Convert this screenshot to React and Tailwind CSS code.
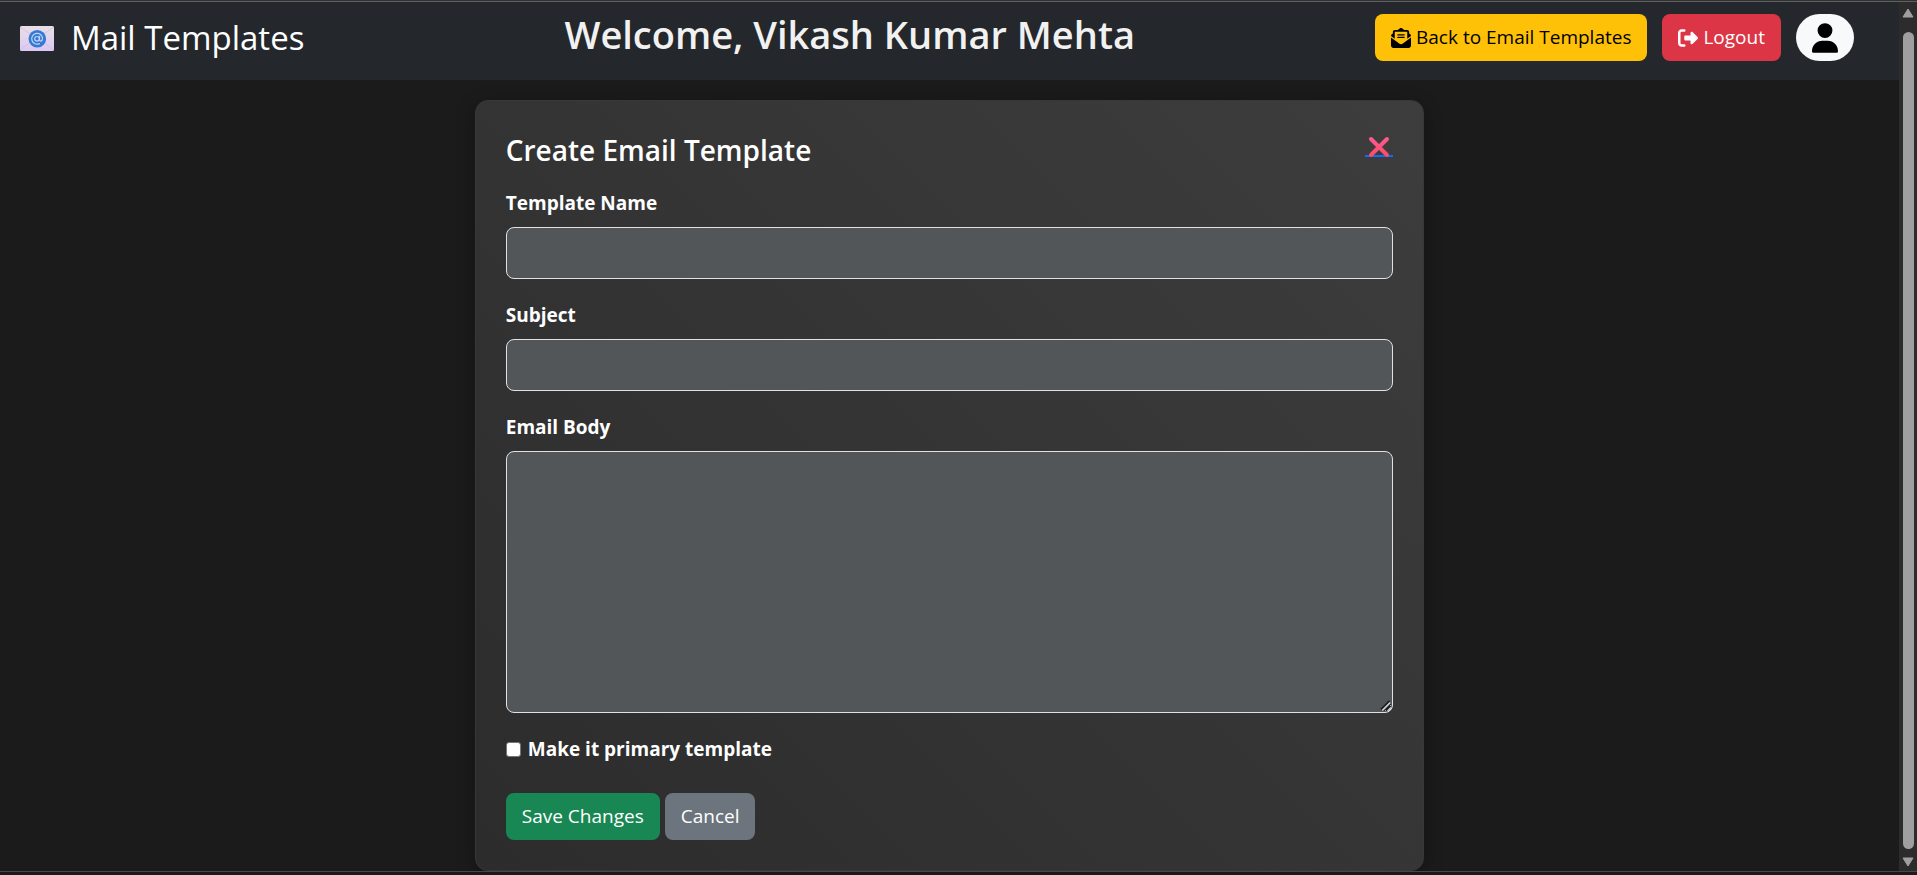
import { FaEnvelopeOpenText, FaRightFromBracket, FaUser } from "react-icons/fa6";

function MailLogo() {
  return (
    <svg viewBox="0 0 34 25" className="h-[25px] w-[34px]" aria-hidden="true">
      <defs>
        <linearGradient id="paper" x1="0" y1="0" x2="0" y2="1">
          <stop offset="0" stopColor="#e9dfe6" />
          <stop offset="1" stopColor="#dcc8f4" />
        </linearGradient>
      </defs>
      <rect width="34" height="25" rx="1.5" fill="url(#paper)" />
      <path d="M0 1L13 10M34 1L21 10M0 24L12 15M34 24L22 15" stroke="#cfbcdc" strokeWidth="0.7" fill="none" />
      <circle cx="17.3" cy="12.7" r="8.8" fill="#3479d3" />
      <g fill="none" stroke="#c3d3f5" strokeWidth="1.2" strokeLinecap="round">
        <circle cx="17" cy="12.8" r="2.3" />
        <path d="M19.5 10.4v3.2c0 2.2 3 2 3-1a5.4 5.4 0 1 0-3 5" />
      </g>
    </svg>
  );
}

function CloseMark() {
  return (
    <svg viewBox="0 0 28 22" className="h-[22px] w-7" aria-hidden="true">
      <defs>
        <linearGradient id="cross" gradientUnits="userSpaceOnUse" x1="0" y1="1" x2="0" y2="21">
          <stop offset="0" stopColor="#fd5a94" />
          <stop offset="1" stopColor="#fb4a63" />
        </linearGradient>
      </defs>
      <rect y="19" width="28" height="2" fill="#0d6efd" />
      <path d="M6 3L22 19M22 3L6 19" fill="none" stroke="url(#cross)" strokeWidth="4" strokeLinecap="round" />
    </svg>
  );
}

function ResizeGrip() {
  return (
    <svg viewBox="0 0 12 12" className="pointer-events-none absolute right-px bottom-px size-3" aria-hidden="true">
      <path d="M1 9.5L9.5 1M6 10.5L10.5 6" stroke="#1f2021" strokeWidth="1.8" />
      <path d="M2.2 10.5L10.2 2.5M7.6 11L11 7.6" stroke="#d4d6d8" strokeWidth="1.4" />
    </svg>
  );
}

function Scrollbar() {
  return (
    <div className="flex w-[18px] shrink-0 flex-col items-center bg-[#2c2c2c] pt-1.5 pb-1" aria-hidden="true">
      <svg viewBox="0 0 12 10" className="h-2.5 w-3 shrink-0">
        <path d="M6 1L11 9H1Z" fill="#9f9f9f" stroke="#9f9f9f" strokeLinejoin="round" />
      </svg>
      <div className="mt-3.5 mb-2 w-[11px] grow rounded-full bg-[#9f9f9f]" />
      <svg viewBox="0 0 12 10" className="h-2.5 w-3 shrink-0">
        <path d="M6 9L11 1H1Z" fill="#9f9f9f" stroke="#9f9f9f" strokeLinejoin="round" />
      </svg>
    </div>
  );
}

function Header() {
  return (
    <header className="flex items-start justify-between bg-[#24272b] pt-3 pr-[45px] pb-[18px] pl-5">
      <a href="#home" className="flex h-12 items-center gap-[17px] text-[33px] text-white">
        <MailLogo />
        Mail Templates
      </a>
      <h1 className="pl-5 text-[38px] leading-[40px] font-semibold text-[#f1f1f1]">Welcome, Vikash Kumar Mehta</h1>
      <nav className="flex gap-[15px]">
        <button type="button" className="flex h-[47px] items-center gap-[5px] rounded-lg bg-[#ffc107] px-4 text-[19px] text-black">
          <FaEnvelopeOpenText className="size-5" />
          Back to Email Templates
        </button>
        <button type="button" className="flex h-[47px] items-center gap-[5px] rounded-lg bg-[#dc3545] px-4 text-[19px] text-white">
          <FaRightFromBracket className="size-5" />
          Logout
        </button>
        <button type="button" aria-label="Profile" className="flex h-[47px] w-[58px] items-center justify-center rounded-full bg-[#f8f9fa] text-black">
          <FaUser className="h-[30px] w-[26px]" />
        </button>
      </nav>
    </header>
  );
}

const labelStyle = "block text-[19px] leading-[30px] font-bold text-white";
const fieldStyle = "block w-full rounded-lg border border-[#dee2e6] bg-[#525659] px-4 text-[19px] text-white";

function TemplateForm() {
  return (
    <form className="rounded-[13px] border border-[#383838] bg-linear-45 from-[#2c2c2c] to-[#3d3d3d] p-[30px] shadow-[0_5px_19px_rgba(0,0,0,0.3)]">
      <div className="flex items-start justify-between">
        <h2 className="text-[28px] leading-[38px] font-semibold text-white">Create Email Template</h2>
        <a href="#close" aria-label="Close" className="mt-[5px]">
          <CloseMark />
        </a>
      </div>
      <div className="mt-[19px] mb-[21px]">
        <label htmlFor="name" className={labelStyle}>Template Name</label>
        <input id="name" type="text" className={`${fieldStyle} mt-[9px] h-[52px]`} />
      </div>
      <div className="mb-[21px]">
        <label htmlFor="subject" className={labelStyle}>Subject</label>
        <input id="subject" type="text" className={`${fieldStyle} mt-[9px] h-[52px]`} />
      </div>
      <div className="mb-[21px]">
        <label htmlFor="body" className={labelStyle}>Email Body</label>
        <div className="relative mt-[9px]">
          <textarea id="body" className={`${fieldStyle} h-[262px] resize-y`} />
          <ResizeGrip />
        </div>
      </div>
      <div className="flex items-center gap-[7px]">
        <input id="primary" type="checkbox" className="size-[15px] appearance-none rounded-[3px] border border-[#767676] bg-white checked:bg-[#0d6efd]" />
        <label htmlFor="primary" className={labelStyle}>Make it primary template</label>
      </div>
      <div className="mt-[29px] flex gap-[5px]">
        <button type="submit" className="h-[47px] rounded-lg bg-[#198754] px-4 text-[19px] text-white">Save Changes</button>
        <button type="button" className="h-[47px] rounded-lg bg-[#6c757d] px-4 text-[19px] text-white">Cancel</button>
      </div>
    </form>
  );
}

export default function App() {
  return (
    <div className="flex h-screen flex-col bg-[#1b1b1b] font-['Open_Sans','Noto_Sans',sans-serif]">
      <div className="h-0.5 shrink-0 border-b border-[#606060] bg-[#303030]" />
      <div className="flex min-h-0 grow">
        <div className="min-w-0 grow overflow-hidden">
          <Header />
          <main className="mx-auto mt-5 w-1/2 min-w-[600px]">
            <TemplateForm />
          </main>
        </div>
        <Scrollbar />
      </div>
      <div className="h-1 shrink-0 border-t border-[#484846] bg-[#1c1a18]" />
    </div>
  );
}
